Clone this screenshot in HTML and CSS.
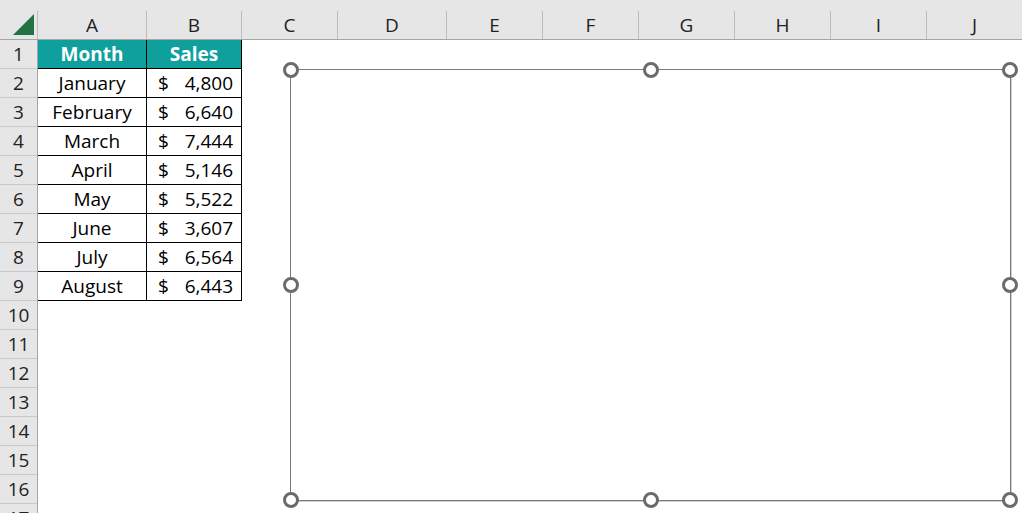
FILE: index.html
```html
<!DOCTYPE html>
<html lang="en">
<head>
  <meta charset="UTF-8" />
  <title>Sales – Sheet1</title>
  <link rel="stylesheet" href="styles.css">
</head>
<body>

  <div class="sheet">
    <div class="col-heads">
      <div class="corner">
        <svg width="22" height="22" viewBox="0 0 22 22"><polygon points="21,0 21,21 0,21" fill="#217346"/></svg>
      </div>
      <div class="ch w-a">A</div>
      <div class="ch w-b">B</div>
      <div class="ch">C</div>
      <div class="ch w-a">D</div>
      <div class="ch">E</div>
      <div class="ch">F</div>
      <div class="ch">G</div>
      <div class="ch">H</div>
      <div class="ch">I</div>
      <div class="ch">J</div>
    </div>

    <div class="main">
      <div class="row-heads">
        <div class="rh">1</div>
        <div class="rh">2</div>
        <div class="rh">3</div>
        <div class="rh">4</div>
        <div class="rh">5</div>
        <div class="rh">6</div>
        <div class="rh">7</div>
        <div class="rh">8</div>
        <div class="rh">9</div>
        <div class="rh">10</div>
        <div class="rh">11</div>
        <div class="rh">12</div>
        <div class="rh">13</div>
        <div class="rh">14</div>
        <div class="rh">15</div>
        <div class="rh">16</div>
        <div class="rh">17</div>
      </div>

      <div class="data">
        <div class="cell head">Month</div>
        <div class="cell head">Sales</div>

        <div class="cell">January</div>
        <div class="cell money"><span>$</span><span>4,800</span></div>
        <div class="cell">February</div>
        <div class="cell money"><span>$</span><span>6,640</span></div>
        <div class="cell">March</div>
        <div class="cell money"><span>$</span><span>7,444</span></div>
        <div class="cell">April</div>
        <div class="cell money"><span>$</span><span>5,146</span></div>
        <div class="cell">May</div>
        <div class="cell money"><span>$</span><span>5,522</span></div>
        <div class="cell">June</div>
        <div class="cell money"><span>$</span><span>3,607</span></div>
        <div class="cell">July</div>
        <div class="cell money"><span>$</span><span>6,564</span></div>
        <div class="cell">August</div>
        <div class="cell money"><span>$</span><span>6,443</span></div>
      </div>
    </div>

    <!-- empty chart placeholder, selected -->
    <div class="chart">
      <span class="handle tl"></span>
      <span class="handle tc"></span>
      <span class="handle tr"></span>
      <span class="handle ml"></span>
      <span class="handle mr"></span>
      <span class="handle bl"></span>
      <span class="handle bc"></span>
      <span class="handle br"></span>
    </div>
  </div>

</body>
</html>
```

FILE: styles.css
```css
* {
  box-sizing: border-box;
}

body {
  margin: 0;
  background: #fff;
  font-family: "Open Sans", "Noto Sans", sans-serif;
  font-size: 19px;
  color: #000;
  overflow: hidden;
}

.sheet {
  position: relative;
  width: 1022px;
  height: 513px;
  overflow: hidden;
}

.col-heads {
  display: flex;
  height: 40px;
  padding-top: 11px;
  background: #e6e6e6;
  border-bottom: 1px solid #a6a6a6;
}

.corner {
  flex: none;
  width: 38px;
  height: 28px;
  border-right: 1px solid #bcbcbc;
  display: flex;
  align-items: flex-end;
  justify-content: flex-end;
  padding: 0 2px 3px 0;
}

.corner svg {
  display: block;
}

.ch {
  flex: none;
  width: 96px;
  height: 28px;
  border-right: 1px solid #bcbcbc;
  display: flex;
  align-items: center;
  justify-content: center;
  color: #222;
}

.w-a {
  width: 109px;
}

.w-b {
  width: 95px;
}

.main {
  display: flex;
  align-items: flex-start;
}

.row-heads {
  flex: none;
  width: 38px;
  background: #e6e6e6;
  border-right: 1px solid #a6a6a6;
}

.rh {
  height: 29px;
  border-bottom: 1px solid #c8c8c8;
  display: flex;
  align-items: center;
  justify-content: center;
  color: #222;
}

.data {
  display: grid;
  grid-template-columns: 109px 95px;
}

.cell {
  height: 29px;
  border-right: 1px solid #000;
  border-bottom: 1px solid #000;
  display: flex;
  align-items: center;
  justify-content: center;
}

.cell.head {
  background: #0fa09e;
  color: #fff;
  font-weight: bold;
}

.cell.money {
  justify-content: space-between;
  padding: 0 8px 0 11px;
}

.chart {
  position: absolute;
  left: 290px;
  top: 69px;
  width: 721px;
  height: 432px;
  border: 1px solid #7a7a7a;
  box-shadow: 1px 1px 0 #cfcfcf;
}

.handle {
  position: absolute;
  width: 16px;
  height: 16px;
  border: 3px solid #6b6b6b;
  border-radius: 50%;
  background: #fff;
  transform: translate(-50%, -50%);
}

.tl { left: 0; top: 0; }
.tc { left: 50%; top: 0; }
.tr { left: 100%; top: 0; }
.ml { left: 0; top: 50%; }
.mr { left: 100%; top: 50%; }
.bl { left: 0; top: 100%; }
.bc { left: 50%; top: 100%; }
.br { left: 100%; top: 100%; }
```
